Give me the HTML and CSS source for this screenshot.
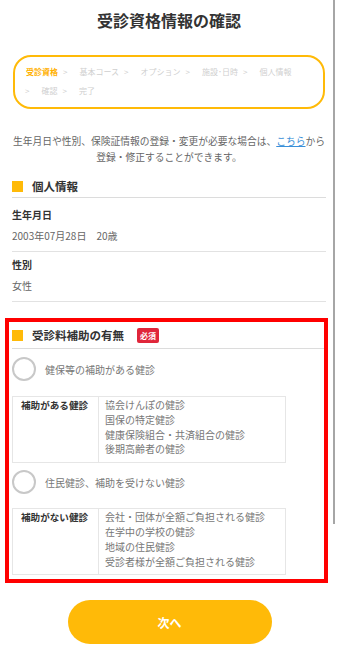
FILE: index.html
```html
<!DOCTYPE html>
<html lang="ja">
<head>
<meta charset="utf-8">
<link rel="stylesheet" href="styles.css">
</head>
<body>
<div class="page">
  <h1 class="title">受診資格情報の確認</h1>

  <nav class="steps">
    <span class="step step-current">受診資格</span><span class="sep">&gt;</span>
    <span class="step">基本コース</span><span class="sep">&gt;</span>
    <span class="step">オプション</span><span class="sep">&gt;</span>
    <span class="step">施設･日時</span><span class="sep">&gt;</span>
    <span class="step">個人情報</span><span class="sep">&gt;</span>
    <span class="step">確認</span><span class="sep">&gt;</span>
    <span class="step">完了</span>
  </nav>

  <p class="notice">生年月日や性別、保険証情報の登録・変更が必要な場合は、<a class="link" href="#">こちら</a>から登録・修正することができます。</p>

  <section class="block">
    <h2 class="sec-head"><span class="sq"></span>個人情報</h2>
    <div class="item">
      <div class="item-label">生年月日</div>
      <div class="item-value">2003年07月28日　20歳</div>
    </div>
    <div class="item">
      <div class="item-label">性別</div>
      <div class="item-value">女性</div>
    </div>
  </section>

  <section class="block-red">
    <h2 class="sec-head sec-head-red"><span class="sq"></span>受診料補助の有無<span class="badge">必須</span></h2>

    <label class="radio"><span class="circle"></span><span class="radio-text">健保等の補助がある健診</span></label>
    <div class="tbl tbl-1">
      <div class="tbl-head">補助がある健診</div>
      <div class="tbl-body">
        <div>協会けんぽの健診</div>
        <div>国保の特定健診</div>
        <div>健康保険組合・共済組合の健診</div>
        <div>後期高齢者の健診</div>
      </div>
    </div>

    <label class="radio radio-2"><span class="circle"></span><span class="radio-text">住民健診、補助を受けない健診</span></label>
    <div class="tbl">
      <div class="tbl-head">補助がない健診</div>
      <div class="tbl-body">
        <div>会社・団体が全額ご負担される健診</div>
        <div>在学中の学校の健診</div>
        <div>地域の住民健診</div>
        <div>受診者様が全額ご負担される健診</div>
      </div>
    </div>
  </section>

  <div class="actions">
    <button class="btn-next">次へ</button>
  </div>

  <div class="scrollbar"></div>
</div>
</body>
</html>
```

FILE: styles.css
```css
* { box-sizing: border-box; }
html, body { margin: 0; padding: 0; background: #fff; }
body {
  font-family: "Noto Sans CJK JP", "Noto Sans", sans-serif;
  color: #333;
}
.page { position: relative; width: 338px; min-height: 650px; overflow: hidden; }

.title {
  margin: 8px 0 0;
  font-size: 16px;
  line-height: 24px;
  font-weight: 700;
  text-align: center;
  color: #333;
}

.steps {
  margin: 23px 13px 0;
  border: 2px solid #FFBA08;
  border-radius: 18px;
  padding: 5px 22px 7px 5px;
  display: flex;
  flex-wrap: wrap;
  font-size: 8px;
  line-height: 19px;
  color: #cfcfcf;
}
.step-current { color: #FFB000; font-weight: 700; margin-left: 6px; }
.sep { margin: 0 12px 0 5px; }

.notice {
  margin: 24px 12px 0;
  font-size: 9.75px;
  line-height: 16px;
  color: #666;
  text-align: center;
}
.link { color: #3a8fd8; text-decoration: underline; }

.block { margin: 10px 12px 0; }
.sec-head {
  margin: 0;
  height: 23px;
  display: flex;
  align-items: center;
  border-bottom: 1px solid #dcdcdc;
  font-size: 11.5px;
  font-weight: 700;
  color: #333;
}
.sq {
  width: 11px;
  height: 11px;
  background: #FFBA08;
  margin-right: 9px;
}
.item {
  padding: 5px 0 7px;
  border-bottom: 1px solid #e2e2e2;
}
.block .sec-head { margin-bottom: 4px; }
.item-label { font-size: 10px; line-height: 16px; font-weight: 700; color: #333; }
.item-value { margin-top: 5px; font-size: 10px; line-height: 16px; color: #666; }

.block-red {
  margin: 16px 10px 0 5px;
  border: 4px solid #ff0000;
  padding: 0 0 4px 3px;
}
.sec-head-red { height: 27px; }
.badge {
  margin-left: 13px;
  background: #e0263a;
  color: #fff;
  font-size: 8px;
  line-height: 15px;
  padding: 0 3px;
  border-radius: 2px;
  font-weight: 700;
}

.radio {
  display: flex;
  align-items: center;
  margin-top: 8px;
}
.radio-2 { margin-top: 7px; }
.circle {
  width: 24px;
  height: 24px;
  border-radius: 50%;
  border: 2px solid #c8c8c8;
  background: #fff;
  margin-right: 9px;
}
.radio-text { font-size: 10px; color: #777; }

.tbl {
  margin-top: 14px;
  width: 274px;
  display: flex;
  border: 1px solid #e6e6e6;
}
.tbl-1 { margin-top: 15px; }
.tbl-head {
  width: 86px;
  border-right: 1px solid #e6e6e6;
  padding: 1px 0 0 8px;
  font-size: 9.6px;
  line-height: 14.8px;
  font-weight: 700;
  color: #333;
}
.tbl-body {
  padding: 1px 0 5px 6px;
  font-size: 10px;
  line-height: 14.8px;
  color: #777;
}

.actions { display: flex; justify-content: center; margin-top: 17px; }
.btn-next {
  width: 204px;
  height: 44px;
  border: none;
  border-radius: 22px;
  background: #FFBA08;
  color: #fff;
  font-family: inherit;
  font-size: 12px;
  font-weight: 700;
  margin-left: 1px;
}

.scrollbar {
  position: absolute;
  left: 333px;
  top: 0;
  width: 2px;
  height: 524px;
  background: #a6a6a6;
}
```
